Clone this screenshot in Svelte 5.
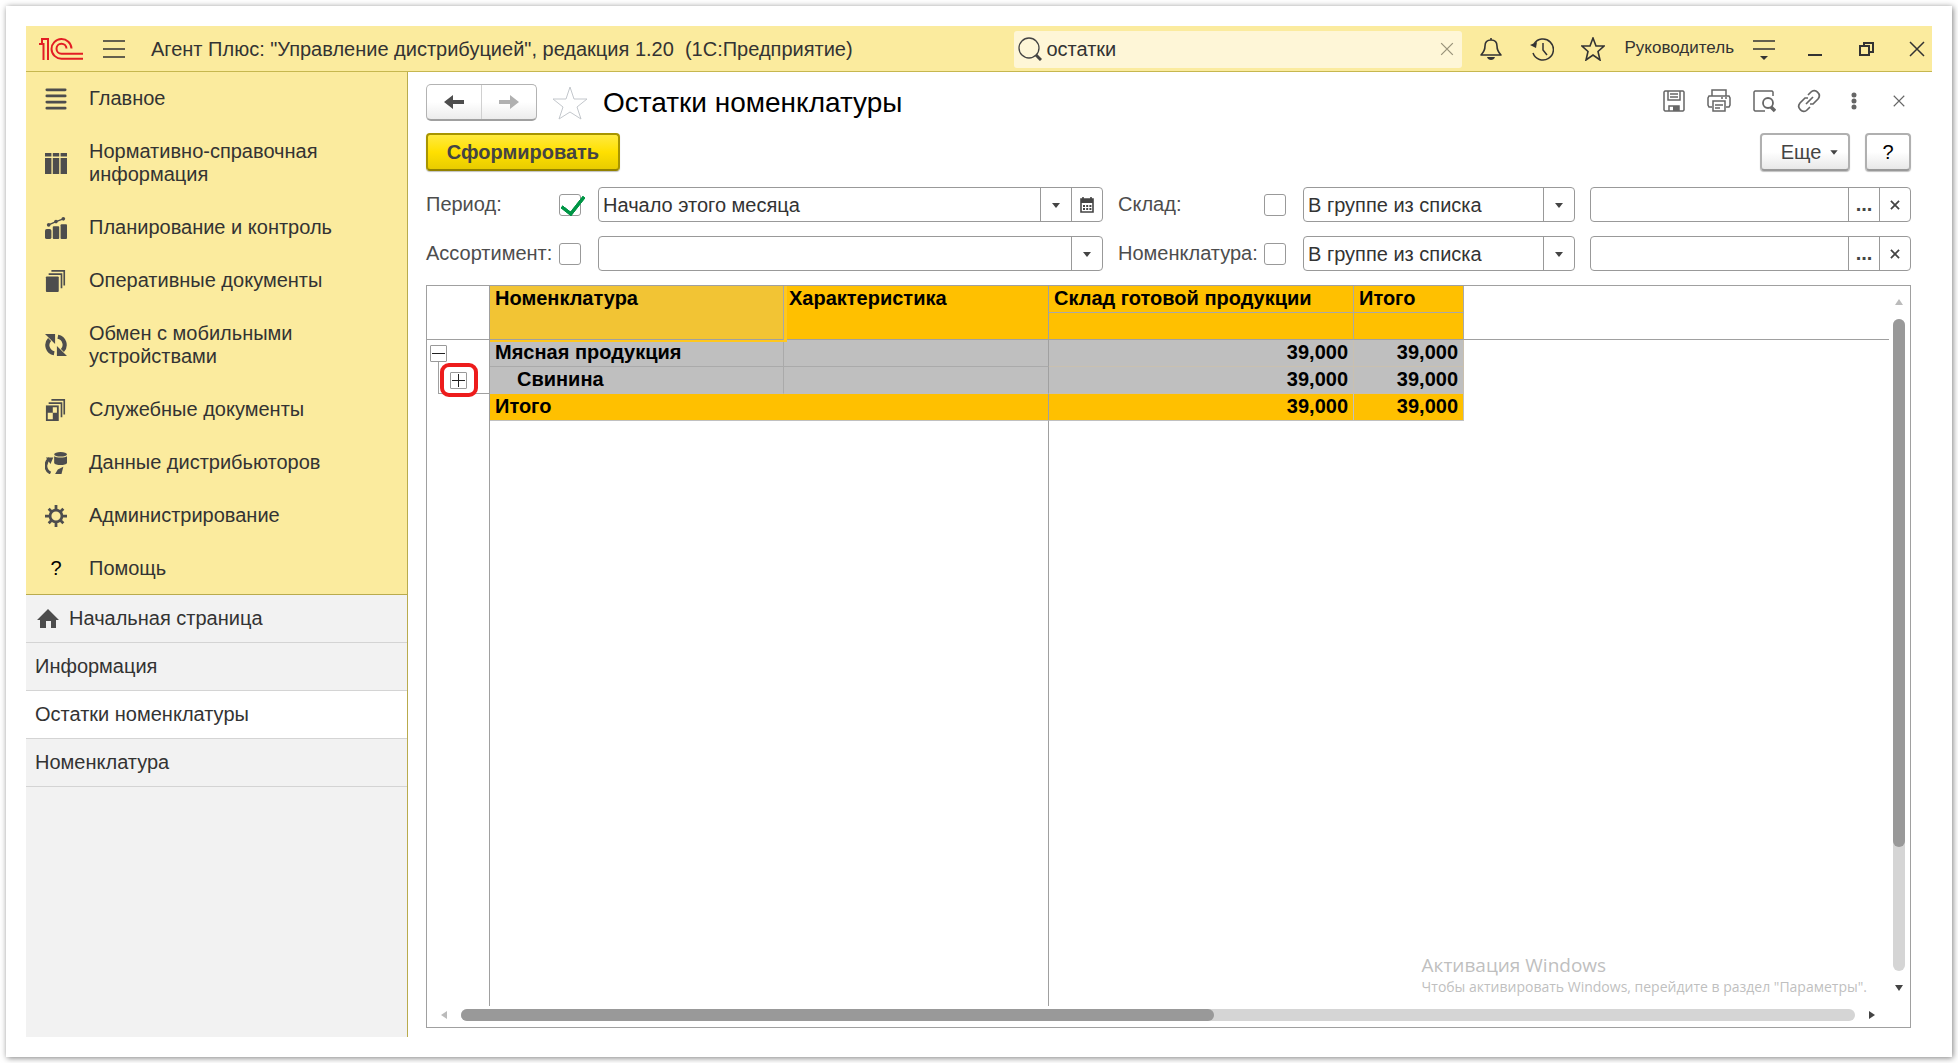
<script lang="ts">
	type Section = {
		icon: string;
		title: string;
	};

	type ReportRow = {
		name: string;
		stock: string;
		total: string;
		kind: 'group' | 'child' | 'total';
	};

	const sections: Section[] = [
		{ icon: 'list', title: 'Главное' },
		{ icon: 'catalog', title: 'Нормативно-справочная информация' },
		{ icon: 'chart', title: 'Планирование и контроль' },
		{ icon: 'docs', title: 'Оперативные документы' },
		{ icon: 'sync', title: 'Обмен с мобильными устройствами' },
		{ icon: 'service', title: 'Служебные документы' },
		{ icon: 'data', title: 'Данные дистрибьюторов' },
		{ icon: 'gear', title: 'Администрирование' },
		{ icon: 'help', title: 'Помощь' }
	];

	const tabs = ['Начальная страница', 'Информация', 'Остатки номенклатуры', 'Номенклатура'];

	const rows: ReportRow[] = [
		{ name: 'Мясная продукция', stock: '39,000', total: '39,000', kind: 'group' },
		{ name: 'Свинина', stock: '39,000', total: '39,000', kind: 'child' },
		{ name: 'Итого', stock: '39,000', total: '39,000', kind: 'total' }
	];

	let activeTab = $state('Остатки номенклатуры');
	let search = $state('остатки');
	let period = $state('Начало этого месяца');
	let assortment = $state('');
	let usePeriod = $state(true);
	let useAssortment = $state(false);
	let filters = $state([
		{ id: 'warehouse', label: 'Склад:', enabled: false, mode: 'В группе из списка', value: '' },
		{ id: 'item', label: 'Номенклатура:', enabled: false, mode: 'В группе из списка', value: '' }
	]);
</script>

{#snippet icon(name: string)}
	<svg class="icon" viewBox="0 0 24 24" width="24" height="24" aria-hidden="true">
		{#if name === 'list'}
			<path d="M2 2h20M2 8.700h20M2 15.300h20M2 22h20" class="line" stroke-width="3" stroke-linecap="round" />
		{:else if name === 'catalog'}
			<path
				d="M0 1h7v4H0zM8.500 1h7v4h-7zM17 1h7v4h-7zM0 6.500h7V24H0zM8.500 6.500h7V24h-7zM17 6.500h7V24h-7z"
				fill="currentColor"
			/>
		{:else if name === 'chart'}
			<g fill="currentColor">
				<rect x="0" y="13" width="7" height="11" rx="2" />
				<rect x="8.500" y="10" width="7" height="14" rx="1" />
				<rect x="17" y="8" width="7" height="16" rx="1" />
				<circle cx="4" cy="8.500" r="2" />
				<circle cx="12" cy="5" r="2" />
				<circle cx="20" cy="2" r="2" />
			</g>
			<path d="M4 8.500L12 5l8-3" class="line" stroke-width="1.500" />
		{:else if name === 'docs'}
			<rect x="1" y="7" width="14" height="17" rx="1" fill="currentColor" />
			<path d="M4 4.500h14V20M7 1h14v16" class="line" stroke-width="1.800" />
		{:else if name === 'service'}
			<path d="M1 7h14v17H1z" fill="currentColor" />
			<path d="M8.500 9H13v6H8.500zM3 15h5.500v7H3z" fill="#fbeb9e" />
			<path d="M4 4.500h14V20M7 1h14v16" class="line" stroke-width="1.800" />
		{:else if name === 'sync'}
			<path d="M10 21A9 9 0 0 1 5 6M14 3a9 9 0 0 1 5 15" class="line" stroke-width="4.500" />
			<path d="M0 0h11v11zM24 24H13V13z" fill="currentColor" />
		{:else if name === 'data'}
			<ellipse cx="17" cy="2.500" rx="7" ry="2.500" fill="currentColor" />
			<path d="M10 4.500c2 2 12 2 14 0V12c-1 3-13 3-14 0z" fill="currentColor" />
			<path d="M5 7c-6 5-5 13 1 16" class="line" stroke-width="3" />
			<path d="M1 6h8l-3 7zM11 24l3-5 6-3-2 8z" fill="currentColor" />
		{:else if name === 'gear'}
			<circle cx="12" cy="12" r="6.500" class="line" stroke-width="3" />
			<path
				d="M12 0v5M12 19v5M0 12h5M19 12h5M4 4l3 3M17 17l3 3M4 20l3-3M17 7l3-3"
				class="line"
				stroke-width="3"
			/>
		{:else if name === 'home'}
			<path d="M12 2l11 11h-3v8h-5v-7h-5v7H4v-8H1z" fill="currentColor" />
		{:else if name === 'menu'}
			<path d="M1 4h22M1 12h22M1 20h22" class="line" stroke-width="1.500" />
		{:else if name === 'search'}
			<circle cx="11" cy="11" r="10" class="line" stroke-width="1.300" />
			<path d="M18 18l5 5" class="line" stroke-width="3" />
		{:else if name === 'cross'}
			<path d="M5 5l14 14M19 5L5 19" class="line" stroke-width="1.500" />
		{:else if name === 'bell'}
			<path
				d="M2 18c3-3 4-5 4-9 0-4 2-6 6-6s6 2 6 6c0 4 1 6 4 9zM12 3V1"
				class="line"
				stroke-width="1.600"
				stroke-linejoin="round"
			/>
			<path d="M8 20h8c-1 4-7 4-8 0z" fill="currentColor" />
		{:else if name === 'history'}
			<path d="M4 7a10.500 10.500 0 1 1-1 9M13 6v7l4 5" class="line" stroke-width="1.500" />
			<path d="M0 8l7-3-1 6z" fill="currentColor" />
		{:else if name === 'star'}
			<path d="M12 1l3 8h8l-6 5.500 2 8.500-7-5-7 5 2-8.500L1 9h8z" class="line" stroke-width="1.600" />
		{:else if name === 'settings'}
			<path d="M1 4h22M1 12h22" class="line" stroke-width="1.600" />
			<path d="M8 19h8l-4 4z" fill="currentColor" />
		{:else if name === 'minimize'}
			<path d="M5 18h14" class="line" stroke-width="2" />
		{:else if name === 'restore'}
			<path d="M6 9h9v9H6zM10 9V6h9v9h-4" class="line" stroke-width="2" />
		{:else if name === 'save'}
			<path
				d="M3 2h18l1 1v18l-1 1H3l-1-1V3zM6 2v9h12V2M8 5h8M8 8h8M7 22v-5h10v5"
				class="line"
				stroke-width="1.500"
			/>
			<path d="M11 17h6v5h-6z" fill="currentColor" />
		{:else if name === 'print'}
			<path
				d="M5 7V1h14v6M5 18H2l-1-2V9l1-2h20l1 2v7l-1 2h-3M6 12h12v10H6zM8 16h8M8 19h5M14 9h2M18 9h2"
				class="line"
				stroke-width="1.500"
			/>
		{:else if name === 'preview'}
			<path d="M13 22H3l-1-1V3l1-1h17l1 1v4" class="line" stroke-width="1.500" />
			<circle cx="16" cy="14" r="5" class="line" stroke-width="1.800" />
			<path d="M19 18l4 4" class="line" stroke-width="3.500" />
		{:else if name === 'link'}
			<path
				d="M11 6l3-3c4-4 11 2 7 7l-5 5h-3M13 18l-3 3c-4 4-11-2-7-7l5-5h3M9 15l7-7"
				class="line"
				stroke-width="1.700"
			/>
		{:else if name === 'dots'}
			<path d="M12 6h0M12 12h0M12 18h0" class="line" stroke-width="5" stroke-linecap="round" />
		{:else if name === 'back'}
			<path d="M2 12l9-7v5h11v4H11v5z" fill="currentColor" />
		{:else if name === 'forward'}
			<path d="M22 12l-9-7v5H2v4h11v5z" fill="currentColor" />
		{:else if name === 'calendar'}
			<path d="M6 6h12v13H6zM8 4v3M16 4v3" class="line" stroke-width="1.600" />
			<path d="M6 6h12v4H6z" fill="currentColor" />
			<path d="M8 13h9M8 16h9" class="line" stroke-width="2" stroke-dasharray="2 1.200" />
		{:else if name === 'down'}
			<path d="M8 10h8l-4 5z" fill="currentColor" />
		{/if}
	</svg>
{/snippet}

<div class="window">
	<header class="topbar">
		<svg class="logo" viewBox="0 0 44 22" width="44" height="22" aria-label="1С">
			<path
				d="M3 5V1h6v21M0 6h4.500v16M32.500 10.500a10 9.800 0 1 0-10 10.200h21.500M27.500 10.500a5 5 0 1 0-5 5.200h21.500"
			/>
		</svg>
		<button class="flat menu" aria-label="Меню">{@render icon('menu')}</button>
		<span class="app-title">Агент Плюс: "Управление дистрибуцией", редакция 1.20&nbsp; (1С:Предприятие)</span>
		<div class="search">
			{@render icon('search')}
			<input type="text" aria-label="Поиск" bind:value={search} />
			<button class="flat clear" aria-label="Очистить" onclick={() => (search = '')}>
				{@render icon('cross')}
			</button>
		</div>
		<div class="tools">
			<button class="flat" aria-label="Уведомления">{@render icon('bell')}</button>
			<button class="flat" aria-label="История">{@render icon('history')}</button>
			<button class="flat" aria-label="Избранное">{@render icon('star')}</button>
		</div>
		<a class="user" href="#user">Руководитель</a>
		<div class="tools system">
			<button class="flat" aria-label="Настройки">{@render icon('settings')}</button>
			<button class="flat" aria-label="Свернуть">{@render icon('minimize')}</button>
			<button class="flat" aria-label="Восстановить">{@render icon('restore')}</button>
			<button class="flat" aria-label="Закрыть">{@render icon('cross')}</button>
		</div>
	</header>

	<div class="body">
		<aside>
			<nav class="sections">
				{#each sections as section}
					<a href="#{section.icon}">
						{#if section.icon === 'help'}
							<span class="question">?</span>
						{:else}
							{@render icon(section.icon)}
						{/if}
						<span>{section.title}</span>
					</a>
				{/each}
			</nav>
			<div class="tabs">
				{#each tabs as tab, i}
					<button class:active={tab === activeTab} onclick={() => (activeTab = tab)}>
						{#if i === 0}
							{@render icon('home')}
						{/if}
						{tab}
					</button>
				{/each}
			</div>
		</aside>

		<main>
			<div class="heading">
				<div class="history">
					<button aria-label="Назад">{@render icon('back')}</button>
					<button aria-label="Вперед" disabled>{@render icon('forward')}</button>
				</div>
				<button class="flat favorite" aria-label="В избранное">
					<svg viewBox="0 0 36 36" width="36" height="36" aria-hidden="true">
						<path d="M18 2l4 12h13l-10 8 4 12-11-7-11 7 4-12-10-8h13z" />
					</svg>
				</button>
				<h1>Остатки номенклатуры</h1>
				<div class="actions">
					<button class="flat" aria-label="Сохранить">{@render icon('save')}</button>
					<button class="flat" aria-label="Печать">{@render icon('print')}</button>
					<button class="flat" aria-label="Просмотр">{@render icon('preview')}</button>
					<button class="flat" aria-label="Ссылка">{@render icon('link')}</button>
					<button class="flat" aria-label="Действия">{@render icon('dots')}</button>
					<button class="flat small" aria-label="Закрыть форму">{@render icon('cross')}</button>
				</div>
			</div>

			<div class="commands">
				<button class="command primary">Сформировать</button>
				<button class="command more">Еще {@render icon('down')}</button>
				<button class="command help">?</button>
			</div>

			<div class="filters">
				<label for="period">Период:</label>
				<input type="checkbox" aria-label="Использовать период" bind:checked={usePeriod} />
				<div class="field">
					<input id="period" type="text" bind:value={period} />
					<button aria-label="Выбрать период">{@render icon('down')}</button>
					<button aria-label="Календарь">{@render icon('calendar')}</button>
				</div>
				{@render filter(0)}

				<label for="assortment">Ассортимент:</label>
				<input type="checkbox" aria-label="Использовать ассортимент" bind:checked={useAssortment} />
				<div class="field">
					<input id="assortment" type="text" bind:value={assortment} />
					<button aria-label="Выбрать ассортимент">{@render icon('down')}</button>
				</div>
				{@render filter(1)}
			</div>

			<div class="report">
				<div class="sheet">
					<table>
						<colgroup>
							<col class="c-tree" />
							<col class="c-name" />
							<col class="c-feature" />
							<col class="c-stock" />
							<col class="c-total" />
							<col />
						</colgroup>
						<thead>
							<tr>
								<td class="gutter" rowspan="2"></td>
								<th class="selected" rowspan="2">Номенклатура</th>
								<th class="freeze" rowspan="2">Характеристика</th>
								<th>Склад готовой продукции</th>
								<th>Итого</th>
								<td class="blank" rowspan="2"></td>
							</tr>
							<tr>
								<th></th>
								<th></th>
							</tr>
						</thead>
						<tbody>
							{#each rows as row}
								<tr class={row.kind}>
									<td class="gutter">
										{#if row.kind === 'group'}
											<button class="toggle" aria-label="Свернуть группу">
												<svg viewBox="0 0 15 15" width="15" height="15"><path d="M1 7.500h13" /></svg>
											</button>
										{:else if row.kind === 'child'}
											<button class="toggle" aria-label="Развернуть группу">
												<svg viewBox="0 0 15 15" width="15" height="15"><path d="M1 7.500h13M7.500 1v13" /></svg>
											</button>
											<span class="marker"></span>
										{/if}
									</td>
									{#if row.kind === 'total'}
										<td class="freeze" colspan="2">{row.name}</td>
									{:else}
										<td class="name">{row.name}</td>
										<td class="freeze"></td>
									{/if}
									<td class="number">{row.stock}</td>
									<td class="number">{row.total}</td>
									<td class="blank"></td>
								</tr>
							{/each}
							<tr class="rest">
								<td class="gutter"></td>
								<td class="freeze" colspan="2"></td>
								<td colspan="3"></td>
							</tr>
						</tbody>
					</table>
					<div class="watermark">
						<p class="big">Активация Windows</p>
						<p>Чтобы активировать Windows, перейдите в раздел "Параметры".</p>
					</div>
				</div>
				<div class="scroll vertical">
					<span class="arrow up"></span>
					<div class="track"><div class="thumb"></div></div>
					<span class="arrow down"></span>
				</div>
				<div class="scroll horizontal">
					<span class="arrow left"></span>
					<div class="track"><div class="thumb"></div></div>
					<span class="arrow right"></span>
				</div>
			</div>
		</main>
	</div>
</div>

{#snippet filter(index: number)}
	<label class="second" for={filters[index].id}>{filters[index].label}</label>
	<input type="checkbox" aria-label="Использовать отбор" bind:checked={filters[index].enabled} />
	<div class="field">
		<select id={filters[index].id} bind:value={filters[index].mode}>
			<option>В группе из списка</option>
			<option>Равно</option>
		</select>
		<span class="cell">{@render icon('down')}</span>
	</div>
	<div class="field third">
		<input type="text" aria-label="Значение отбора" bind:value={filters[index].value} />
		<button class="dots" aria-label="Выбрать">...</button>
		<button class="reset" aria-label="Очистить" onclick={() => (filters[index].value = '')}>
			{@render icon('cross')}
		</button>
	</div>
{/snippet}

<style>
	:global(body) {
		margin: 0;
		background-color: #fff;
	}

	* {
		box-sizing: border-box;
	}

	.window {
		display: flex;
		flex-direction: column;
		min-height: calc(100vh - 12px);
		margin: 6px;
		padding: 20px;
		background-color: #fff;
		box-shadow: 1px 1px 6px rgba(0, 0, 0, 0.5);
		font-family: 'Liberation Sans', Arial, sans-serif;
		font-size: 20px;
		line-height: 23px;
		color: #333;
	}

	button,
	input,
	select {
		margin: 0;
		font: inherit;
		color: inherit;
	}

	a {
		color: inherit;
		text-decoration: none;
	}

	.icon {
		display: block;
		flex: none;
	}

	.line {
		fill: none;
		stroke: currentColor;
	}

	.flat {
		display: flex;
		justify-content: center;
		align-items: center;
		padding: 0;
		border: none;
		background-color: transparent;
	}

	.topbar {
		display: flex;
		align-items: center;
		height: 46px;
		padding: 1px 3px 0 13px;
		background-color: #fbeb9e;
		border-bottom: 1px solid #c6b74f;
	}

	.logo {
		flex: none;
		fill: none;
		stroke: #e31e24;
		stroke-width: 2;
	}

	.menu {
		margin: 0 25px 0 19px;
	}

	.app-title {
		flex: 1;
		white-space: nowrap;
	}

	.search {
		display: flex;
		align-items: center;
		gap: 4px;
		width: 448px;
		height: 37px;
		padding: 0 5px 0 4px;
		border-radius: 3px;
		background-color: #fef6d7;
		color: #444;
	}

	.search input {
		flex: 1;
		min-width: 0;
		padding: 0;
		border: none;
		outline: none;
		background-color: transparent;
		color: #333;
	}

	.clear {
		color: #99927a;
	}

	.clear .icon {
		width: 20px;
	}

	.tools {
		display: flex;
		gap: 27px;
		margin-left: 17px;
	}

	.user {
		margin: 0 18px 4px 19px;
		font-size: 17px;
	}

	.system {
		margin-left: 0;
	}

	.body {
		display: flex;
		flex: 1;
	}

	aside {
		flex: none;
		width: 382px;
		border-right: 1px solid #b9ab4d;
		background-color: #f2f2f2;
	}

	.sections {
		border-bottom: 1px solid #b9ab4d;
		background-color: #fbeb9e;
	}

	.sections a {
		display: flex;
		align-items: center;
		gap: 22px;
		padding: 15px 60px 15px 19px;
	}

	.sections a:last-child {
		padding-bottom: 14px;
	}

	.sections .icon {
		width: 22px;
		height: 22px;
		color: #4d4d4d;
	}

	.question {
		width: 22px;
		text-align: center;
		color: #000;
	}

	.tabs button {
		display: flex;
		align-items: center;
		gap: 9px;
		width: 100%;
		height: 48px;
		padding: 0 9px;
		border: none;
		border-bottom: 1px solid #d4d4d4;
		background-color: transparent;
		text-align: left;
	}

	.tabs button.active {
		background-color: #fff;
	}

	.tabs .icon {
		margin-left: 1px;
		color: #4d4d4d;
	}

	main {
		display: flex;
		flex: 1;
		flex-direction: column;
		min-width: 0;
		padding: 12px 21px 9px 18px;
	}

	.heading {
		display: flex;
		align-items: center;
		height: 37px;
	}

	.history {
		display: flex;
		width: 111px;
		height: 37px;
		border: 1px solid #b3b3b3;
		border-bottom: 2px solid #a0a0a0;
		border-radius: 5px;
		background: linear-gradient(#fff, #fff 50%, #ececec);
	}

	.history button {
		display: flex;
		flex: 1;
		justify-content: center;
		align-items: center;
		padding: 0;
		border: none;
		background-color: transparent;
		color: #4d4d4d;
	}

	.history button + button {
		border-left: 1px solid #d0d0d0;
		color: #b0b0b0;
	}

	.favorite {
		margin: 0 15px;
	}

	.favorite path {
		fill: none;
		stroke: #c3c7cc;
	}

	h1 {
		flex: 1;
		margin: 0;
		font-size: 28px;
		line-height: 32px;
		font-weight: normal;
		color: #000;
	}

	.actions {
		display: flex;
		gap: 21px;
		margin-bottom: 3px;
		color: #666;
	}

	.small {
		width: 24px;
	}

	.small .icon {
		width: 18px;
	}

	.commands {
		display: flex;
		gap: 15px;
		margin: 12px 0 16px;
	}

	.command {
		display: flex;
		justify-content: center;
		align-items: center;
		height: 38px;
		padding: 0;
		border: 2px solid #b0b0b0;
		border-bottom-color: #999;
		border-radius: 4px;
		background: linear-gradient(#fff, #fff 50%, #e8e8e8);
		box-shadow: 0 1px 1px rgba(0, 0, 0, 0.25);
		color: #444;
	}

	.primary {
		width: 194px;
		margin-right: auto;
		border-color: #a89500;
		border-bottom-color: #938200;
		background: linear-gradient(#ffea40, #ffe000 50%, #e8cc00);
		font-weight: bold;
	}

	.more {
		gap: 2px;
		width: 90px;
		padding-left: 16px;
	}

	.more .icon {
		width: 22px;
	}

	.help {
		width: 46px;
		color: #000;
	}

	.filters {
		display: grid;
		grid-template-columns: 133px 39px 505fr 161px 39px 272fr 336fr;
		row-gap: 14px;
		align-items: center;
		margin-bottom: 14px;
	}

	label {
		color: #4d4d4d;
	}

	.second {
		padding-left: 15px;
	}

	.third {
		margin-left: 15px;
	}

	input[type='checkbox'] {
		position: relative;
		width: 22px;
		height: 22px;
		border: 1px solid #999;
		border-radius: 3px;
		background-color: #fff;
		appearance: none;
	}

	input[type='checkbox']:checked::after {
		content: '';
		position: absolute;
		top: -4px;
		left: 6px;
		width: 10px;
		height: 20px;
		border: solid #009646;
		border-width: 0 4px 4px 0;
		border-radius: 1px;
		transform: rotate(38deg);
	}

	.field {
		display: flex;
		height: 35px;
		overflow: hidden;
		border: 1px solid #999;
		border-radius: 4px;
		background-color: #fff;
	}

	.field input,
	.field select {
		flex: 1;
		min-width: 0;
		padding: 2px 4px 0;
		border: none;
		outline: none;
		background-color: transparent;
		appearance: none;
	}

	.field button,
	.cell {
		display: flex;
		flex: none;
		justify-content: center;
		align-items: center;
		width: 31px;
		padding: 0;
		border: none;
		border-left: 1px solid #999;
		background-color: transparent;
		color: #444;
	}

	.field .dots {
		font-weight: bold;
	}

	.reset .icon {
		width: 14px;
	}

	.reset .line {
		stroke-width: 3;
	}

	.report {
		display: grid;
		flex: 1;
		grid-template-columns: 1fr 21px;
		grid-template-rows: 1fr 21px;
		border: 1px solid #a0a0a0;
	}

	.sheet {
		position: relative;
		display: grid;
		min-width: 0;
	}

	table {
		width: 100%;
		height: 100%;
		table-layout: fixed;
		border-spacing: 0;
		font-weight: bold;
		color: #000;
	}

	.c-tree {
		width: 63px;
	}

	.c-name {
		width: 294px;
	}

	.c-feature {
		width: 265px;
	}

	.c-stock {
		width: 305px;
	}

	.c-total {
		width: 110px;
	}

	th,
	td {
		height: 27px;
		padding: 1px 5px 0;
		border: solid #a8a8a8;
		border-width: 0 1px 1px 0;
		line-height: 23px;
		text-align: left;
		vertical-align: top;
		white-space: nowrap;
	}

	th {
		background-color: #ffc000;
	}

	thead tr:last-child th,
	thead .gutter,
	thead .blank,
	thead .selected,
	thead .freeze {
		border-bottom-color: #a0a0a0;
	}

	.selected {
		position: relative;
		background-color: #f2c434;
	}

	.selected::after {
		content: '';
		position: absolute;
		inset: 0 -4px -3px 0;
		border: solid #ffc71e;
		border-width: 0 3px 2px 0;
	}

	.group td,
	.child td {
		border-color: #aaa;
		background-color: #bfbfbf;
	}

	.group .number,
	.child .number {
		border-color: #c9c0b0;
	}

	.total td {
		border-color: #c0c0c0;
		background-color: #ffc000;
	}

	.child td {
		border-bottom-color: #bfbfbf;
	}

	.child .name {
		padding-left: 27px;
	}

	.number {
		text-align: right;
	}

	tbody .blank,
	tbody .gutter {
		border-bottom: none;
		background-color: #fff;
	}

	.blank {
		border-right: none;
	}

	tbody .freeze,
	thead .freeze,
	tr .gutter {
		border-right-color: #a0a0a0;
	}

	.rest td {
		height: auto;
		border-bottom: none;
	}

	.rest td:last-child {
		border-right: none;
	}

	.gutter {
		position: relative;
		padding: 5px 3px;
		line-height: 0;
	}

	.child .gutter {
		padding-left: 23px;
	}

	/* tree line from the parent toggle down to the end of the group */
	.child .gutter::before {
		content: '';
		position: absolute;
		inset: -5px 0 0 11px;
		border: solid #a0a0a0;
		border-width: 0 0 1px 1px;
	}

	.toggle {
		position: relative;
		width: 17px;
		height: 17px;
		padding: 0;
		border: 1px solid #999;
		border-radius: 1px;
		background-color: #fff;
	}

	.toggle path {
		stroke: #222;
	}

	.toggle svg {
		display: block;
	}

	.marker {
		position: absolute;
		top: -4px;
		left: 13px;
		width: 38px;
		height: 34px;
		border: 4px solid #ed1c1c;
		border-radius: 9px;
		z-index: 1;
	}

	.watermark {
		position: absolute;
		right: 22px;
		bottom: 9px;
		font-family: 'Open Sans', 'Noto Sans', sans-serif;
		font-size: 14px;
		line-height: 20px;
		color: #bfbfbf;
	}

	.watermark p {
		margin: 0;
	}

	.watermark .big {
		font-size: 19px;
		line-height: 24px;
	}

	.scroll {
		display: flex;
		align-items: center;
	}

	.vertical {
		flex-direction: column;
		gap: 14px;
		padding: 13px 1px 15px 0;
	}

	.horizontal {
		gap: 14px;
		padding: 0 14px 4px;
	}

	.track {
		display: flex;
		flex: 1;
		border-radius: 6px;
		background-color: #d5d5d5;
	}

	.thumb {
		border-radius: 6px;
		background-color: #999;
	}

	.vertical .track {
		width: 12px;
	}

	.vertical .thumb {
		width: 12px;
		height: 81%;
	}

	.horizontal .track {
		height: 12px;
	}

	.horizontal .thumb {
		width: 54%;
		height: 12px;
	}

	.arrow {
		border: 4px solid transparent;
	}

	.up {
		border-top: none;
		border-bottom: 6px solid #bbb;
	}

	.down {
		border-bottom: none;
		border-top: 6px solid #444;
	}

	.left {
		border-left: none;
		border-right: 6px solid #bbb;
	}

	.right {
		border-right: none;
		border-left: 6px solid #444;
	}
</style>
